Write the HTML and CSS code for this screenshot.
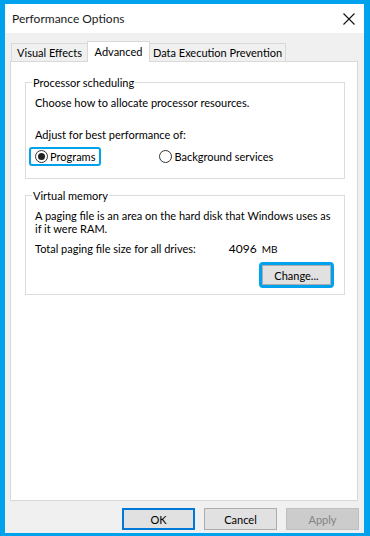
FILE: index.html
```html
<!DOCTYPE html>
<html>

<head>
  <meta charset="utf-8">
  <meta name="viewport" content="width=device-width, initial-scale=1.0">
  <title>Performance Options</title>
  <link rel="stylesheet" href="styles.css">
</head>

<body>
  <div class="window">
    <div class="titlebar">
      <span class="title">Performance Options</span>
      <svg class="close" width="12" height="12" viewBox="0 0 12 12">
        <path d="M0.5 0.5 L11.5 11.5 M11.5 0.5 L0.5 11.5" stroke="#111" stroke-width="1.1" fill="none"/>
      </svg>
    </div>

    <div class="dialog">
      <div class="tabs">
        <div class="tab tab-visual">Visual Effects</div>
        <div class="tab tab-advanced active">Advanced</div>
        <div class="tab tab-dep">Data Execution Prevention</div>
      </div>

      <div class="panel">
        <fieldset class="group group-cpu">
          <legend>Processor scheduling</legend>
          <p class="line">Choose how to allocate processor resources.</p>
          <p class="line adjust">Adjust for best performance of:</p>
          <div class="radios">
            <label class="radio focused"><span class="dot checked"></span>Programs</label>
            <label class="radio bg"><span class="dot"></span>Background services</label>
          </div>
        </fieldset>

        <fieldset class="group group-mem">
          <legend>Virtual memory</legend>
          <p class="line para">A paging file is an area on the hard disk that Windows uses as<br>if it were RAM.</p>
          <div class="line total">
            <span class="total-label">Total paging file size for all drives:</span>
            <span class="size">4096</span>
            <span class="unit">MB</span>
          </div>
          <div class="change-row">
            <div class="focus-ring"><button class="btn change">Change...</button></div>
          </div>
        </fieldset>
      </div>

      <div class="buttons">
        <button class="btn ok">OK</button>
        <button class="btn">Cancel</button>
        <button class="btn disabled">Apply</button>
      </div>
    </div>
  </div>
</body>

</html>
```

FILE: styles.css
```css
body {
  margin: 0;
  padding: 0;
  font-family: Lato, "Liberation Sans", sans-serif;
  font-size: 11px;
  color: #000;
}

.window {
  width: 370px;
  height: 536px;
  box-sizing: border-box;
  border-style: solid;
  border-color: #00a2ed;
  border-width: 4px 6px 3px 5px;
  display: flex;
  flex-direction: column;
  background-color: #f0f0f0;
}

.titlebar {
  height: 29px;
  background-color: #fff;
  display: flex;
  align-items: center;
  justify-content: space-between;
  padding: 0 9px 0 7px;
  flex-shrink: 0;
}

.title {
  font-size: 12px;
  color: #1a1a1a;
}

.close {
  margin-top: 1px;
}

.dialog {
  flex: 1;
  display: flex;
  flex-direction: column;
  padding: 8px 0 0 5px;
}

/* tabs */
.tabs {
  display: flex;
  align-items: flex-end;
  height: 20px;
  padding-left: 1px;
  position: relative;
  z-index: 1;
}

.tab {
  height: 17px;
  line-height: 18px;
  border: 1px solid #d9d9d9;
  border-bottom: none;
  background-color: #f0f0f0;
  text-align: center;
  white-space: nowrap;
}

.tab-visual {
  width: 75px;
}

.tab-advanced {
  width: 61px;
}

.tab-dep {
  width: 135px;
  border-left: none;
}

.tab.active {
  height: 20px;
  line-height: 19px;
  background-color: #fff;
  margin-bottom: -1px;
  margin-left: -1px;
}

/* panel */
.panel {
  box-sizing: border-box;
  height: 440px;
  margin-right: 6px;
  background-color: #fff;
  border: 1px solid #d9d9d9;
  padding: 13px 12px 0 14px;
}

.group {
  margin: 0;
  border: 1px solid #dcdcdc;
  padding: 5px 10px 12px 6px;
  min-width: 0;
}

.group legend {
  padding: 0 1px;
  line-height: 15px;
}

.line {
  margin: 0;
  padding-left: 3px;
  line-height: 15px;
}

.adjust {
  margin-top: 17px;
}

.radios {
  display: flex;
  margin-top: 5px;
}

.radio {
  display: flex;
  align-items: center;
  height: 15px;
  line-height: 15px;
  border: 2px solid transparent;
  border-radius: 3px;
  padding: 0 4px 0 1px;
}

.radio.focused {
  border-color: #00a2ed;
  margin-left: -3px;
  padding-left: 4px;
}

.radio.bg {
  margin-left: 55px;
}

.dot {
  width: 11px;
  height: 11px;
  border: 1px solid #333;
  border-radius: 50%;
  background-color: #fff;
  margin-right: 2px;
  display: flex;
  align-items: center;
  justify-content: center;
  flex-shrink: 0;
}

.dot.checked::after {
  content: "";
  width: 7px;
  height: 7px;
  border-radius: 50%;
  background-color: #222;
}

.group-mem {
  margin-top: 9px;
  padding-bottom: 6px;
}

.para {
  line-height: 13px;
  margin-top: 1px;
  margin-right: -8px;
}

.total {
  margin-top: 6px;
  display: flex;
  align-items: baseline;
}

.size {
  font-size: 12px;
  margin-left: 33px;
}

.unit {
  font-size: 10px;
  margin-left: 5px;
}

.change-row {
  display: flex;
  justify-content: flex-end;
  margin-top: 5px;
}

.focus-ring {
  border: 3px solid #00a2ed;
  border-radius: 4px;
  display: flex;
}

/* buttons */
.btn {
  font-family: inherit;
  font-size: 11px;
  color: #000;
  background-color: #e1e1e1;
  border: 1px solid #adadad;
  width: 73px;
  height: 22px;
  padding: 0;
  margin: 0;
  box-sizing: border-box;
}

.btn.change {
  width: 69px;
  height: 20px;
}

.buttons {
  display: flex;
  justify-content: flex-end;
  gap: 9px;
  margin-top: 7px;
  padding-right: 5px;
}

.btn.ok {
  border: 2px solid #0078d7;
}

.btn.disabled {
  background-color: #cccccc;
  border-color: #bfbfbf;
  color: #838383;
}
```
